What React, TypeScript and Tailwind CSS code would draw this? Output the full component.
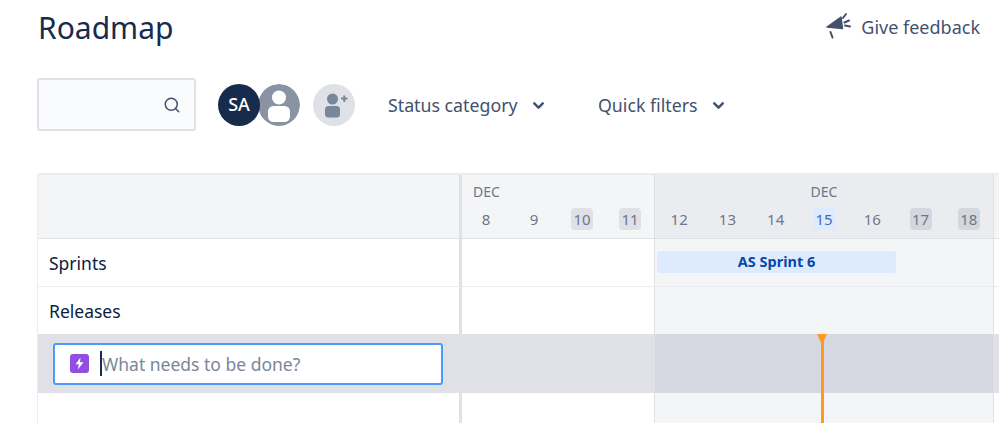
import React from 'react';
import { ChevronDown, Search } from 'lucide-react';

const weekOne = [
  { day: 8 },
  { day: 9 },
  { day: 10, weekend: true },
  { day: 11, weekend: true },
];

const weekTwo = [
  { day: 12 },
  { day: 13 },
  { day: 14 },
  { day: 15, today: true },
  { day: 16 },
  { day: 17, weekend: true },
  { day: 18, weekend: true },
];

interface DayProps {
  day: number;
  weekend?: boolean;
  today?: boolean;
  dark?: boolean;
}

const Day = ({ day, weekend, today, dark }: DayProps) => {
  let chip = '';
  if (today) chip = 'bg-[#deebff] text-[#3d6fb4]';
  else if (weekend) chip = dark ? 'bg-[#d5d7de]' : 'bg-[#dfe1e6]';

  return (
    <div className="flex w-[48.5px] justify-center">
      <span className={`flex h-[22px] w-[22px] items-center justify-center rounded-[4px] text-[15px] ${chip}`}>
        {day}
      </span>
    </div>
  );
};

interface RowProps {
  height: string;
  border?: boolean;
  left?: React.ReactNode;
  leftBg?: string;
  firstBg?: string;
  secondBg?: string;
  thirdBg?: string;
  divider?: boolean;
  children?: React.ReactNode;
}

const Row = ({
  height,
  border = true,
  left,
  leftBg = 'bg-white',
  firstBg = 'bg-white',
  secondBg = 'bg-[#f4f5f7]',
  thirdBg = 'bg-white',
  divider = true,
  children,
}: RowProps) => (
  <div className={`flex shrink-0 ${height} ${border ? 'border-b border-[#ebecf0]' : ''}`}>
    <div className={`flex w-[421px] shrink-0 items-center ${leftBg}`}>{left}</div>
    <div className={`w-[3px] shrink-0 ${divider ? 'bg-[#dfe1e6]' : leftBg}`} />
    <div className={`w-[192px] shrink-0 ${firstBg}`} />
    <div className={`flex w-[340px] shrink-0 items-center border-l border-r border-[#dfe1e6] ${secondBg}`}>
      {children}
    </div>
    <div className={`w-[10px] shrink-0 ${thirdBg}`} />
  </div>
);

const Megaphone = () => (
  <svg width="28" height="28" viewBox="0 0 28 28" fill="none" className="overflow-visible">
    <path d="M1 14 L15 4 L16.5 15.5 Z" fill="#42526e" stroke="#42526e" strokeWidth="1.4" strokeLinejoin="round" />
    <path d="M4.5 19 L6.5 24.5M17 5 L20 1M18.5 9.5 L23 7.5M19 12.5 L24 13.5" stroke="#42526e" strokeWidth="2" strokeLinecap="round" />
  </svg>
);

const UserAvatar = () => (
  <svg width="42" height="42" viewBox="0 0 42 42" className="-ml-[2px] rounded-full">
    <circle cx="21" cy="21" r="21" fill="#8993a4" />
    <circle cx="21" cy="13.5" r="7" fill="#fff" />
    <rect x="10" y="22" width="22" height="16" rx="5.5" fill="#fff" />
  </svg>
);

const AddPerson = () => (
  <svg width="42" height="42" viewBox="0 0 42 42" className="ml-[13px]">
    <circle cx="21" cy="21" r="21" fill="#dfe1e6" />
    <circle cx="19.5" cy="15" r="5.5" fill="#7a869a" />
    <rect x="12" y="22" width="15" height="11.5" rx="3.5" fill="#7a869a" />
    <path d="M28 14.5h6.5M31.25 11.5v6.5" stroke="#7a869a" strokeWidth="2" />
  </svg>
);

const Bolt = () => (
  <div className="flex h-[19px] w-[19px] shrink-0 items-center justify-center rounded-[3px] bg-[#904ee2]">
    <svg width="11" height="13" viewBox="0 0 11 13">
      <path d="M6.5 0.5 L1.5 7.2 H4.8 L3.8 12.5 L9.5 5.2 H6 Z" fill="#fff" />
    </svg>
  </div>
);

const Filter = ({ label, width }: { label: string; width: string }) => (
  <div className={`flex items-center pt-[2px] text-[17.75px] text-[#42526e] ${width}`}>
    <span>{label}</span>
    <ChevronDown size={17} strokeWidth={3.5} className="ml-[12px] text-[#42526e]" />
  </div>
);

export default function App() {
  return (
    <div
      className="relative h-[423px] w-[999px] overflow-hidden bg-white pl-[37px]"
      style={{ fontFamily: '"Noto Sans", sans-serif' }}
    >
      <div className="flex h-[56px] items-center justify-between pr-[19px]">
        <h1 className="pl-[1px] text-[30px] leading-none text-[#172b4d]">Roadmap</h1>
        <div className="flex items-center gap-[7px] pb-[2px] text-[18px] text-[#42526e]">
          <Megaphone />
          <span>Give feedback</span>
        </div>
      </div>

      <div className="mt-[22px] flex h-[53px] items-center">
        <div className="flex h-[53px] w-[159px] items-center justify-end rounded-[3px] border-2 border-[#dfe1e6] bg-[#fafbfc] pr-[13px]">
          <Search size={18} strokeWidth={2} className="text-[#42526e]" />
        </div>
        <div className="ml-[22px] flex items-center">
          <div className="relative z-10 flex h-[42px] w-[42px] items-center justify-center rounded-full bg-[#172b4d] text-[18px] font-medium text-white">
            SA
          </div>
          <UserAvatar />
          <AddPerson />
        </div>
        <div className="ml-[33px]">
          <Filter label="Status category" width="w-[210px]" />
        </div>
        <Filter label="Quick filters" width="w-[140px]" />
      </div>

      <div className="mt-[42px] flex h-[251px] w-[1000px] flex-col overflow-hidden rounded-tl-[3px] border-l border-t-2 border-[#ebecf0]">
        <div className="flex h-[64px] shrink-0 border-b border-[#dfe1e6] text-[#6b778c]">
          <div className="w-[421px] shrink-0 bg-[#f4f5f7]" />
          <div className="w-[3px] shrink-0 bg-[#dfe1e6]" />
          <div className="flex w-[192px] shrink-0 flex-col bg-[#f4f5f7]">
            <div className="pt-[7px] pl-[11px] text-[14px] leading-[20px]">DEC</div>
            <div className="mt-[6px] flex">
              {weekOne.map((d) => (
                <Day key={d.day} {...d} />
              ))}
            </div>
          </div>
          <div className="flex w-[340px] shrink-0 flex-col border-l border-r border-[#dfe1e6] bg-[#ebecf0]">
            <div className="pt-[7px] text-center text-[14px] leading-[20px]">DEC</div>
            <div className="mt-[6px] flex">
              {weekTwo.map((d) => (
                <Day key={d.day} {...d} dark />
              ))}
            </div>
          </div>
          <div className="w-[10px] shrink-0 bg-[#f4f5f7]" />
        </div>

        <Row
          height="h-[48px]"
          left={<span className="pl-[11px] pt-[1px] text-[17.5px] text-[#091e42]">Sprints</span>}
        >
          <div className="mb-[1px] ml-[2px] flex h-[22px] w-[239px] items-center justify-center rounded-[3px] bg-[#deebff] text-[14.5px] font-bold text-[#0747a6]">
            AS Sprint 6
          </div>
        </Row>

        <Row
          height="h-[47px]"
          border={false}
          left={<span className="pl-[11px] pt-[1px] text-[17.5px] text-[#091e42]">Releases</span>}
        />

        <Row
          height="h-[59px]"
          border={false}
          divider={false}
          leftBg="bg-[#dfe1e6]"
          firstBg="bg-[#dfe1e6]"
          secondBg="bg-[#d5d8e0]"
          thirdBg="bg-[#dfe1e6]"
          left={
            <div className="ml-[15px] flex h-[42px] w-[390px] items-center rounded-[3px] border-2 border-[#4c9aff] bg-white pl-[15px]">
              <Bolt />
              <span className="ml-[11px] h-[25px] w-[2px] bg-[#172b4d]" />
              <span className="pt-[2px] text-[17.5px] text-[#7a869a]">What needs to be done?</span>
            </div>
          }
        />

        <Row height="h-[40px]" border={false} />
      </div>

      <div className="absolute left-[817px] top-[334px] h-0 w-0 border-x-[5.5px] border-t-[11px] border-x-transparent border-t-[#ff991f]" />
      <div className="absolute bottom-0 left-[821px] top-[334px] w-[3px] bg-[#ff991f]" />
    </div>
  );
}
